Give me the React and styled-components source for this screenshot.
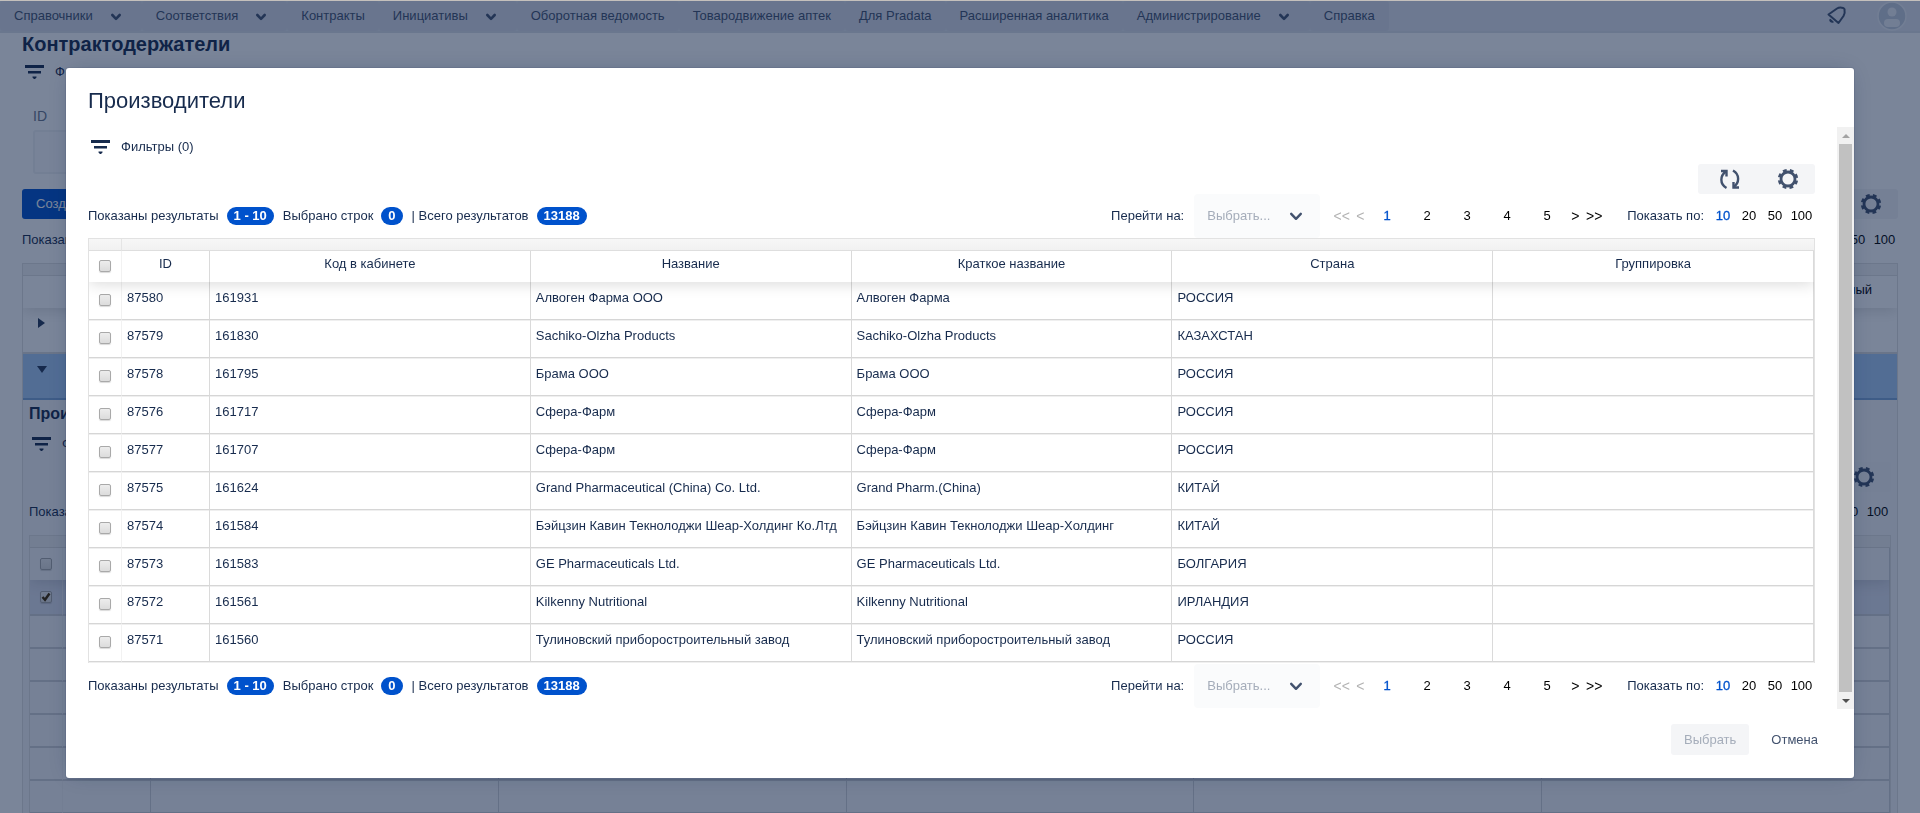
import React from "react";
import styled, { createGlobalStyle } from "styled-components";

const Global = createGlobalStyle`
  * { box-sizing: border-box; }
  html, body, #root { height: 100%; }
  body { margin: 0; overflow: hidden; background: #fff; color: #172b4d; font: 13px/20px "Liberation Sans", Arial, sans-serif; }
  button, select { font: inherit; }
`;

/* ---------- page behind the dialog ---------- */

const Page = styled.div`
  height: 100%;
  display: flex;
  flex-direction: column;
  overflow: hidden;
  border-top: 1px solid #c4c0bc;
`;
const NavBar = styled.header`
  flex: none;
  height: 32px;
  display: flex;
  align-items: stretch;
  background: #e2e5ee;
  border-bottom: 2px solid #dde0e8;
`;
const NavItem = styled.a`
  display: flex;
  align-items: center;
  gap: 11px;
  padding: 0 14px;
  background: #dbdde7;
  color: #42526e;
  text-decoration: none;
  white-space: nowrap;
  border-radius: 3px;
`;
const NavRight = styled.div`
  margin-left: auto;
  display: flex;
  align-items: center;
  gap: 27px;
  padding-right: 12px;
  color: #42526e;
`;
const Avatar = styled.button`
  width: 32px;
  height: 30px;
  padding: 0;
  border: 0;
  background: none;
`;
const Main = styled.main`
  flex: 1;
  display: flex;
  flex-direction: column;
  min-height: 0;
  padding: 0 22px;
`;
const PageTitle = styled.h1`
  margin: 0 0 1px;
  font-size: 20px;
  line-height: 22px;
  font-weight: 700;
`;
const FilterButton = styled.button`
  display: flex;
  align-items: center;
  gap: 9px;
  height: 32px;
  padding: 0;
  border: 0;
  background: none;
  color: #172b4d;
  align-self: flex-start;
`;
const Field = styled.label`
  display: flex;
  flex-direction: column;
  gap: 4px;
  width: 280px;
  padding: 18px 11px 0;
  color: #6b778c;
  font-size: 14px;
`;
const Input = styled.input`
  height: 44px;
  border: 2px solid #f0f1f4;
  border-radius: 3px;
  background: #fafbfc;
`;
const Bar = styled.div`
  display: flex;
  justify-content: space-between;
  align-items: center;
  padding: ${(p) => p.$pad || "0"};
`;
const Primary = styled.button`
  height: 30px;
  padding: 0 14px;
  border: 0;
  border-radius: 3px;
  background: #0052cc;
  color: #fff;
`;
const BackTable = styled.div`
  flex: 1;
  min-height: 0;
  border: 1px solid #e0e0e0;
  border-bottom: 0;
`;
const BackStrip = styled.div`
  height: 12px;
  background: #f3f3f3;
  border-bottom: 1px solid #e0e0e0;
`;
const BackHead = styled.div`
  height: 32px;
  padding: 4px 25px;
  text-align: right;
  color: #000;
  box-shadow: 0 2px 15px rgba(0, 0, 0, 0.15);
  clip-path: inset(0 0 -16px 0);
`;
const BackRow = styled.div`
  display: flex;
  align-items: flex-start;
  height: 46px;
  padding: 10px 14px;
  background: ${(p) => (p.$open ? "#a8cbf5" : "transparent")};
  border-bottom: 2px solid ${(p) => (p.$open ? "#7da5d8" : "#dcdcdc")};
`;
const SubPanel = styled.section`
  display: flex;
  flex-direction: column;
  padding: 4px 6px 0;
  background: #f6f7f9;
`;
const SubTitle = styled.h2`
  margin: 0 0 4px;
  font-size: 16px;
  line-height: 20px;
  font-weight: 700;
`;
const SubTable = styled.table`
  width: 100%;
  table-layout: fixed;
  border-collapse: separate;
  border-spacing: 0;
  border: 1px solid #e0e0e0;
`;
const SubStrip = styled.td`
  height: 12px;
  padding: 0;
  border-bottom: 1px solid #d9d9d9;
  background: #f0f0f0;
`;
const SubRow = styled.tr`
  background: ${(p) => (p.$on ? "#dfe2ef" : "transparent")};
  ${(p) => p.$head && "box-shadow: 0 2px 15px rgba(0, 0, 0, 0.15); clip-path: inset(0 0 -16px 0);"}
`;
const SubCell = styled.td`
  height: ${(p) => p.$h || 33}px;
  padding: 0;
  border-right: 1px solid ${(p) => (p.$faint ? "#f0f0f2" : "#d0d1d5")};
  border-bottom: ${(p) => (p.$head ? 0 : 2)}px solid #d0d1d5;
`;

/* ---------- dialog ---------- */

const Overlay = styled.div`
  position: fixed;
  inset: 1px 0 0;
  padding: 67px 66px 0;
  background: rgba(9, 30, 66, 0.54);
`;
const Dialog = styled.section`
  display: flex;
  flex-direction: column;
  background: #fff;
  border-radius: 3px;
  box-shadow: 0 0 0 1px rgba(9, 30, 66, 0.08), 0 2px 1px rgba(9, 30, 66, 0.08), 0 0 20px -6px rgba(9, 30, 66, 0.31);
`;
const DialogTitle = styled.h2`
  margin: 0;
  padding: 21px 22px 14px;
  font-size: 22px;
  line-height: 24px;
  font-weight: 400;
`;
const Scroller = styled.div`
  display: flex;
`;
const Content = styled.div`
  flex: 1;
  min-width: 0;
  display: flex;
  flex-direction: column;
  padding: 4px 22px 1px;
`;
const Track = styled.div`
  width: 17px;
  display: flex;
  flex-direction: column;
  align-items: center;
  background: #f1f1f1;
`;
const Arrow = styled.button`
  width: 17px;
  height: 17px;
  padding: 0;
  border: 0;
  background: none;
  display: grid;
  place-items: center;
  color: ${(p) => (p.$off ? "#a3a3a3" : "#505050")};
`;
const Thumb = styled.div`
  flex: 1;
  width: 13px;
  background: #c1c1c1;
`;
const Tools = styled.div`
  align-self: flex-end;
  display: flex;
  gap: 3px;
  height: 30px;
  padding-left: 4px;
  border-radius: 3px;
  background: #f4f5f7;
`;
const DialogTools = styled.div`
  display: flex;
  justify-content: flex-end;
  padding-top: 1px;
`;
const ToolButton = styled.button`
  width: 55px;
  padding: 0;
  border: 0;
  background: none;
  color: #42526e;
  display: grid;
  place-items: center;
`;
const Summary = styled.div`
  display: flex;
  align-items: center;
  white-space: nowrap;
`;
const Count = styled.b`
  height: 18px;
  margin: 0 9px 0 8px;
  padding: 0 7px;
  border-radius: 9px;
  background: #0052cc;
  color: #fff;
  line-height: 18px;
`;
const Pager = styled.nav`
  display: flex;
  align-items: center;
`;
const SelectBox = styled.span`
  position: relative;
  display: block;
  margin: 0 10px;
  color: #42526e;
  svg { position: absolute; right: 12px; top: 10px; pointer-events: none; }
`;
const Select = styled.select`
  width: 126px;
  height: 44px;
  padding: 0 13px;
  border: 0;
  border-radius: 4px;
  appearance: none;
  background: #fafbfc;
  color: #a5adba;
  display: block;
`;
const PageLink = styled.button`
  width: ${(p) => p.$w || 40}px;
  padding: 0;
  border: 0;
  background: none;
  text-align: center;
  color: ${(p) => (p.$on ? "#0052cc" : p.$off ? "#b3b3b3" : "#000")};
  font-size: ${(p) => (p.$arrow ? 14 : 13)}px;
  -webkit-text-stroke: ${(p) => (p.$on ? "0.3px #0052cc" : "0")};
`;
const SizeLabel = styled.span`
  margin: 0 6px 0 22px;
`;

const Grid = styled.table`
  width: 100%;
  margin-bottom: 1px;
  table-layout: fixed;
  border-collapse: separate;
  border-spacing: 0;
  border: 1px solid #e2e2e2;
`;
const Strip = styled.th`
  height: 12px;
  padding: 0;
  border-right: ${(p) => (p.$line ? "1px solid #e5e5e5" : "0")};
  border-bottom: 1px solid #dedede;
  background: linear-gradient(#f7f7f7, #f1f1f1);
`;
const HeadRow = styled.tr`
  box-shadow: 0 2px 15px rgba(0, 0, 0, 0.15);
  clip-path: inset(0 0 -16px 0);
`;
const Th = styled.th`
  height: 31px;
  padding: 0 5px 6px;
  border-right: 1px solid ${(p) => (p.$faint ? "#f2f2f2" : "#dadada")};
  font-weight: 400;
  text-align: center;
`;
const Td = styled.td`
  height: 38px;
  padding: 0 5px 5px;
  border-right: 1px solid ${(p) => (p.$faint ? "#f2f2f2" : "#dadada")};
  border-bottom: 1px solid #d6d6d6;
  box-shadow: 0 1px 0 #efefef;
  white-space: nowrap;
  overflow: hidden;
`;
const CheckCell = styled.span`
  display: flex;
  justify-content: center;
  padding-top: 4px;
`;
const Check = styled.input`
  appearance: none;
  width: 12px;
  height: 12px;
  margin: 0;
  border: 1px solid #a9a9a9;
  border-radius: 2px;
  background: linear-gradient(#ededed, #dcdcdc);
  box-shadow: 0 1px 1px rgba(0, 0, 0, 0.15);
`;
const CheckBox = styled.span`
  display: grid;
  width: 12px;
  margin: 0 auto;
  > * { grid-area: 1 / 1; }
  svg { z-index: 1; pointer-events: none; }
`;
const Footer = styled.footer`
  display: flex;
  justify-content: flex-end;
  gap: 9px;
  padding: 15px 23px 23px;
`;
const FootButton = styled.button`
  height: 31px;
  padding: 0 13px;
  border: 0;
  border-radius: 3px;
  background: ${(p) => (p.disabled ? "#f4f5f7" : "none")};
  color: ${(p) => (p.disabled ? "#a5adba" : "#42526e")};
`;

/* ---------- icons ---------- */

const Chevron = () => (
  <svg width="24" height="24" viewBox="0 0 24 24" fill="none" stroke="currentColor" strokeWidth="2.4" strokeLinecap="round" strokeLinejoin="round">
    <path d="M7.2 9.8 12 14.8l4.8-5" />
  </svg>
);
const NavChevron = () => (
  <svg width="24" height="24" viewBox="0 0 24 24" fill="none" stroke="currentColor" strokeWidth="2.6" strokeLinecap="round" strokeLinejoin="round">
    <path d="M8.300 11 12 14.800l3.700-3.800" />
  </svg>
);
const FilterIcon = () => (
  <svg width="24" height="24" viewBox="0 0 24 24" fill="currentColor">
    <path d="M3 5h19v3H3zM6 11h13v2.500H6zM10.500 16.500h4v1l-1.500 1.500h-1l-1.500-1.500z" />
  </svg>
);
const RefreshIcon = () => (
  <svg width="24" height="24" viewBox="0 0 24 24" fill="none" stroke="currentColor" strokeWidth="2.400">
    <path d="M8.500 21C1.500 17 2 8.500 8 4.500" />
    <path d="M3 4H8.500V9.500" />
    <path d="M15 3.500c7 4 6.500 12.500.5 16.500" />
    <path d="M21 20.500h-5.500V15" />
  </svg>
);
const GearIcon = () => (
  <svg width="24" height="24" viewBox="0 0 24 24" fill="none" stroke="currentColor">
    <circle cx="12" cy="12" r="7" strokeWidth="2.800" />
    <circle cx="12" cy="12" r="8.800" strokeWidth="2.800" strokeDasharray="3.800 3.111" strokeDashoffset="-1.550" />
  </svg>
);
const BellIcon = () => (
  <svg width="24" height="24" viewBox="0 0 24 24" fill="none" stroke="currentColor" strokeWidth="2" strokeLinejoin="round">
    <path d="M3.500 10.500 12 4.500c2.500-1.500 7.500-1 7.500 1 .5 2 0 4.500-1 6.500L13.500 19z" />
    <path d="M5.200 15.500c-.7 1.500 1 3 2.800 2.500z" strokeWidth="1.500" fill="currentColor" />
  </svg>
);
const PersonIcon = () => (
  <svg width="32" height="30" viewBox="0 0 32 30">
    <circle cx="16" cy="15" r="14" fill="#c4ccda" stroke="#eef0f4" strokeWidth="1.500" />
    <circle cx="16" cy="11" r="4.500" fill="#eef0f4" />
    <rect x="8" y="18" width="16" height="8" rx="4" fill="#eef0f4" />
  </svg>
);
const Tick = () => (
  <svg width="12" height="12" viewBox="0 0 12 12" fill="none" stroke="#222" strokeWidth="2.400">
    <path d="M2.500 6 5 8.800 9.500 2.500" />
  </svg>
);
const Triangle = ({ dir }) => (
  <svg width="10" height="10" viewBox="0 0 10 10" fill="#253858">
    <path d={dir === "down" ? "M0 2h10L5 9z" : "M1 0v10l7-5z"} />
  </svg>
);

/* ---------- data ---------- */

const NAV = [
  ["Справочники", 1], ["Соответствия", 1], ["Контракты"], ["Инициативы", 1], ["Оборотная ведомость"],
  ["Товародвижение аптек"], ["Для Pradata"], ["Расширенная аналитика"], ["Администрирование", 1], ["Справка"],
];
const HEADS = ["Код в кабинете", "Название", "Краткое название", "Страна", "Группировка"];
const ROWS = [
  ["87580", "161931", "Алвоген Фарма ООО", "Алвоген Фарма", "РОССИЯ"],
  ["87579", "161830", "Sachiko-Olzha Products", "Sachiko-Olzha Products", "КАЗАХСТАН"],
  ["87578", "161795", "Брама ООО", "Брама ООО", "РОССИЯ"],
  ["87576", "161717", "Сфера-Фарм", "Сфера-Фарм", "РОССИЯ"],
  ["87577", "161707", "Сфера-Фарм", "Сфера-Фарм", "РОССИЯ"],
  ["87575", "161624", "Grand Pharmaceutical (China) Co. Ltd.", "Grand Pharm.(China)", "КИТАЙ"],
  ["87574", "161584", "Бэйцзин Кавин Текнолоджи Шеар-Холдинг Ко.Лтд", "Бэйцзин Кавин Текнолоджи Шеар-Холдинг", "КИТАЙ"],
  ["87573", "161583", "GE Pharmaceuticals Ltd.", "GE Pharmaceuticals Ltd.", "БОЛГАРИЯ"],
  ["87572", "161561", "Kilkenny Nutritional", "Kilkenny Nutritional", "ИРЛАНДИЯ"],
  ["87571", "161560", "Тулиновский приборостроительный завод", "Тулиновский приборостроительный завод", "РОССИЯ"],
];

function Results() {
  return (
    <Bar>
      <Summary>
        Показаны результаты<Count>1 - 10</Count>Выбрано строк<Count>0</Count>| Всего результатов<Count>13188</Count>
      </Summary>
      <Pager>
        <span>Перейти на:</span>
        <SelectBox>
          <Select aria-label="Перейти на" defaultValue="">
            <option value="">Выбрать...</option>
          </Select>
          <Chevron />
        </SelectBox>
        <PageLink $w={23} $off $arrow>&lt;&lt;</PageLink>
        <PageLink $w={14} $off $arrow>&lt;</PageLink>
        {[1, 2, 3, 4, 5].map((n) => (
          <PageLink key={n} $on={n === 1}>{n}</PageLink>
        ))}
        <PageLink $w={16} $arrow>&gt;</PageLink>
        <PageLink $w={22} $arrow>&gt;&gt;</PageLink>
        <SizeLabel>Показать по:</SizeLabel>
        {[10, 20, 50].map((n) => (
          <PageLink key={n} $w={26} $on={n === 10}>{n}</PageLink>
        ))}
        <PageLink $w={27}>100</PageLink>
      </Pager>
    </Bar>
  );
}

function BackResults() {
  return (
    <Bar $pad="0 0 13px">
      <span>Показаны</span>
      <Pager>
        <PageLink $w={26}>50</PageLink>
        <PageLink $w={27}>100</PageLink>
      </Pager>
    </Bar>
  );
}

function Filters({ label = "Фильтры (0)" }) {
  return <FilterButton><FilterIcon />{label}</FilterButton>;
}

function ToolSet() {
  return (
    <Tools>
      <ToolButton aria-label="Обновить"><RefreshIcon /></ToolButton>
      <ToolButton aria-label="Настройки"><GearIcon /></ToolButton>
    </Tools>
  );
}

function SubCells({ first, h, head }) {
  return (
    <>
      <SubCell $h={h} $head={head} $faint>{first}</SubCell>
      {[1, 2, 3, 4, 5, 6].map((n) => <SubCell key={n} $h={h} $head={head} />)}
    </>
  );
}

function Background() {
  return (
    <Page aria-hidden="true">
      <NavBar>
        {NAV.map(([t, c]) => (
          <NavItem href="#" key={t}>{t}{c && <NavChevron />}</NavItem>
        ))}
        <NavRight><BellIcon /><Avatar><PersonIcon /></Avatar></NavRight>
      </NavBar>
      <Main>
        <PageTitle>Контрактодержатели</PageTitle>
        <Filters label="Ф" />
        <Field>ID<Input /></Field>
        <Bar $pad="15px 0 11px"><Primary>Создать</Primary><ToolSet /></Bar>
        <BackResults />
        <BackTable>
          <BackStrip />
          <BackHead>Активный</BackHead>
          <BackRow><Triangle /></BackRow>
          <BackRow $open><Triangle dir="down" /></BackRow>
          <SubPanel>
            <SubTitle>Прои</SubTitle>
            <Filters label="Ф" />
            <Bar $pad="2px 0 10px"><span /><ToolSet /></Bar>
            <BackResults />
            <SubTable>
              <colgroup>
                <col style={{ width: 33 }} /><col style={{ width: 88 }} /><col /><col /><col /><col /><col />
              </colgroup>
              <tbody>
                <tr><SubStrip colSpan="7" /></tr>
                <SubRow $head>
                  <SubCells head h={32} first={<CheckBox><Check type="checkbox" aria-label="Все" /></CheckBox>} />
                </SubRow>
                <SubRow $on>
                  <SubCells h={36} first={<CheckBox><Check type="checkbox" defaultChecked aria-label="Строка" /><Tick /></CheckBox>} />
                </SubRow>
                {[1, 2, 3, 4, 5, 6].map((n) => <SubRow key={n}><SubCells /></SubRow>)}
              </tbody>
            </SubTable>
          </SubPanel>
        </BackTable>
      </Main>
    </Page>
  );
}

export default function App() {
  return (
    <>
      <Global />
      <Background />
      <Overlay>
        <Dialog role="dialog" aria-label="Производители">
          <DialogTitle>Производители</DialogTitle>
          <Scroller>
            <Content>
              <Filters />
              <DialogTools><ToolSet /></DialogTools>
              <Results />
              <Grid>
                <colgroup>
                  <col style={{ width: 33 }} /><col style={{ width: 88 }} /><col /><col /><col /><col /><col />
                </colgroup>
                <thead>
                  <tr><Strip $line /><Strip colSpan="6" /></tr>
                  <HeadRow>
                    <Th $faint><CheckCell><Check type="checkbox" aria-label="Выбрать все" /></CheckCell></Th>
                    <Th>ID</Th>
                    {HEADS.map((h) => <Th key={h}>{h}</Th>)}
                  </HeadRow>
                </thead>
                <tbody>
                  {ROWS.map((r) => (
                    <tr key={r[0]}>
                      <Td $faint><CheckCell><Check type="checkbox" aria-label={r[0]} /></CheckCell></Td>
                      {r.map((v, i) => <Td key={i}>{v}</Td>)}
                      <Td />
                    </tr>
                  ))}
                </tbody>
              </Grid>
              <Results />
            </Content>
            <Track>
              <Arrow $off aria-label="Вверх"><svg width="8" height="4" viewBox="0 0 8 4" fill="currentColor"><path d="M0 4 4 0l4 4z" /></svg></Arrow>
              <Thumb />
              <Arrow aria-label="Вниз"><svg width="8" height="4" viewBox="0 0 8 4" fill="currentColor"><path d="M0 0h8L4 4z" /></svg></Arrow>
            </Track>
          </Scroller>
          <Footer>
            <FootButton disabled>Выбрать</FootButton>
            <FootButton>Отмена</FootButton>
          </Footer>
        </Dialog>
      </Overlay>
    </>
  );
}
